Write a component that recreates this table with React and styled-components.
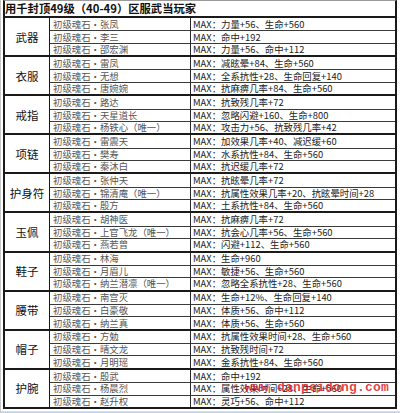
import React from 'react';
import styled, { createGlobalStyle } from 'styled-components';

const GlobalStyle = createGlobalStyle`
  html, body {
    margin: 0;
    padding: 0;
    background: #fff;
  }
  body {
    font-family: "Noto Sans CJK SC", "Liberation Sans", sans-serif;
  }
`;

const Page = styled.div`
  position: relative;
  width: 400px;
  height: 413px;
  overflow: hidden;
  display: flex;
  flex-direction: column;
  box-sizing: border-box;
  border-left: 1px solid #c8c8c8;
`;

const Sheet = styled.div`
  box-sizing: border-box;
  width: 394px;
  margin-left: 2px;
  border: 2px solid #1a1a1a;
  border-top: 1px solid #9a9a9a;
`;

const Title = styled.div`
  height: 15px;
  font-size: 11.3px;
  font-weight: 700;
  line-height: 15px;
  color: #111;
  white-space: nowrap;
  overflow: hidden;
  border-bottom: 2px solid #1a1a1a;
`;

const Group = styled.div`
  display: grid;
  grid-template-columns: 45px 141px 1fr;
  grid-template-rows: repeat(3, 1fr);
  height: 37.1px;
  border-top: ${(p) => (p.$first ? 'none' : '2px solid #1a1a1a')};
`;

const CatCell = styled.div`
  grid-row: 1 / span 3;
  display: flex;
  align-items: center;
  justify-content: center;
  font-size: 11.5px;
  color: #111;
  border-right: 1px solid #1a1a1a;
`;

const Cell = styled.div`
  box-sizing: border-box;
  display: flex;
  align-items: center;
  font-size: 9.4px;
  line-height: 11px;
  white-space: nowrap;
  overflow: hidden;
  border-top: ${(p) => (p.$top ? 'none' : '1px solid #3a3a3a')};
`;

const NameCell = styled(Cell)`
  padding-left: 3px;
  color: #555;
  border-right: 1px solid #2a2a2a;
`;

const MaxCell = styled(Cell)`
  padding-left: 2px;
  color: #222;
`;

const Footer = styled.div`
  flex: 1;
  margin-top: 2px;
  background: linear-gradient(#dde7f3, #b9cbe3);
`;

const Watermark = styled.div`
  position: absolute;
  left: 244px;
  top: 380px;
  font-family: "Liberation Mono", "DejaVu Sans Mono", monospace;
  font-size: 13px;
  font-weight: 700;
  letter-spacing: 0.2px;
  color: rgba(220, 30, 40, 0.85);
  pointer-events: none;
`;

const groups = [
  ['武器', [
    ['张凤', '力量+56、生命+560'],
    ['李三', '命中+192'],
    ['邵宏渊', '力量+56、命中+112'],
  ]],
  ['衣服', [
    ['雷凤', '减眩晕+84、生命+560'],
    ['无想', '全系抗性+28、生命回复+140'],
    ['唐婉婉', '抗麻痹几率+84、生命+560'],
  ]],
  ['戒指', [
    ['路达', '抗致残几率+72'],
    ['天星道长', '忽略闪避+160、生命+800'],
    ['杨铁心（唯一）', '攻击力+56、抗致残几率+42'],
  ]],
  ['项链', [
    ['雷震天', '加效果几率+40、减迟缓+60'],
    ['樊寿', '水系抗性+84、生命+560'],
    ['秦沐白', '抗迟缓几率+72'],
  ]],
  ['护身符', [
    ['张仲天', '抗眩晕几率+72'],
    ['锦清庵（唯一）', '抗属性效果几率+20、抗眩晕时间+28'],
    ['殷方', '土系抗性+84、生命+560'],
  ]],
  ['玉佩', [
    ['胡神医', '抗麻痹几率+72'],
    ['上官飞龙（唯一）', '抗会心几率+56、生命+560'],
    ['燕若曾', '闪避+112、生命+560'],
  ]],
  ['鞋子', [
    ['林海', '生命+960'],
    ['月眉儿', '敏捷+56、生命+560'],
    ['纳兰潜凛（唯一）', '忽略全系抗性+28、生命+560'],
  ]],
  ['腰带', [
    ['南宫灭', '生命+12%、生命回复+140'],
    ['白豪敬', '体质+56、命中+112'],
    ['纳兰真', '体质+56、生命+560'],
  ]],
  ['帽子', [
    ['方勉', '抗属性效果时间+28、生命+560'],
    ['晴文龙', '抗致残时间+72'],
    ['月明瑶', '金系抗性+84、生命+560'],
  ]],
  ['护腕', [
    ['殷武', '命中+192'],
    ['杨晨烈', '属性效果时间+28、生命+560'],
    ['赵升权', '灵巧+56、命中+112'],
  ]],
];

const App = () => {
  return (
    <Page>
      <GlobalStyle />
      <Sheet>
        <Title>用千封顶49级（40-49）区服武当玩家</Title>
        {groups.map(([cat, items], g) => (
          <Group key={cat} $first={g === 0}>
            <CatCell>{cat}</CatCell>
            {items.map(([name, stat], i) => (
              <React.Fragment key={name}>
                <NameCell $top={i === 0}>初级魂石・{name}</NameCell>
                <MaxCell $top={i === 0}>MAX：{stat}</MaxCell>
              </React.Fragment>
            ))}
          </Group>
        ))}
      </Sheet>
      <Footer />
      <Watermark>www.danpeidong.com</Watermark>
    </Page>
  );
};

export default App;
